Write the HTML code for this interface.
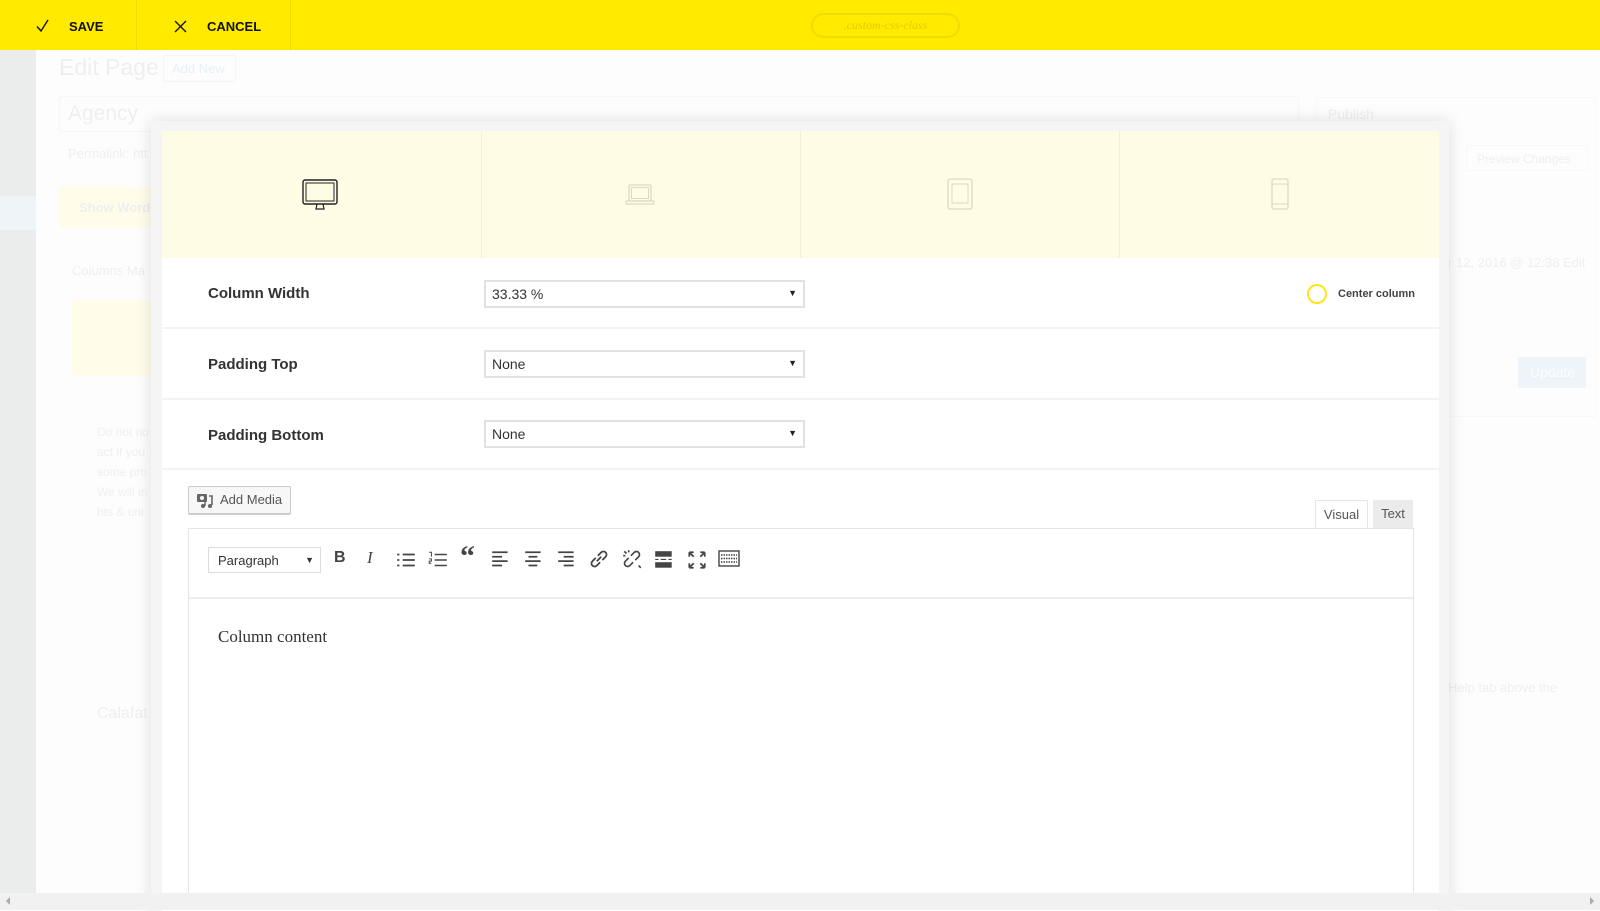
<!DOCTYPE html>
<html><head><meta charset="utf-8"><style>
*{margin:0;padding:0;box-sizing:border-box}
body{width:1600px;height:910px;overflow:hidden;background:#fdfdfd;font-family:"Liberation Sans","DejaVu Sans",sans-serif;position:relative}
.abs{position:absolute}
.top{left:0;top:0;width:1600px;height:50px;background:#ffea00}
.tb{font-weight:bold;font-size:13px;color:#111;top:19px}
.sep{top:0;width:1px;height:50px;background:#f0d800}
.pill{left:811px;top:13px;width:149px;height:25px;border:2px solid #f2dc00;border-radius:13px;color:#e3cc00;font:italic 12px "Liberation Serif",serif;text-align:center;line-height:21px}
.side{left:0;top:50px;width:36px;height:843px;background:#ebecec}
.fade{color:#efefef;white-space:nowrap}
.modal{left:151px;top:121px;width:1298px;height:790px;background:#f5f5f5;box-shadow:0 0 16px rgba(0,0,0,.12)}
.inner{left:162px;top:131px;width:1277px;height:780px;background:#fff}
.tabs{left:162px;top:131px;width:1277px;height:127px;background:#fffce6}
.vs{top:131px;width:1px;height:127px;background:#f4f0d6}
.row{left:162px;width:1277px;height:2px;background:#f3f3f3}
.lbl{left:208px;font-weight:bold;font-size:15px;color:#333}
.sel{left:484px;width:321px;height:28px;border:2px solid #e2e2e2;font-size:14px;color:#333;padding:4px 0 0 6px}
.sel:after{content:"▼";position:absolute;right:6px;top:6px;font-size:9px;color:#222}
.ico{top:548px;width:22px;height:22px}
</style></head><body>
<div class="abs top"></div>
<svg class="abs" style="left:36px;top:19px" width="14" height="14" viewBox="0 0 14 14"><path d="M1 7.5 L5 12 L12 1" fill="none" stroke="#111" stroke-width="1.4"/></svg>
<div class="abs tb" style="left:69px">SAVE</div>
<div class="abs sep" style="left:136px"></div>
<svg class="abs" style="left:174px;top:20px" width="13" height="13" viewBox="0 0 13 13"><path d="M1 1L12 12M12 1L1 12" stroke="#111" stroke-width="1.3"/></svg>
<div class="abs tb" style="left:207px">CANCEL</div>
<div class="abs sep" style="left:290px"></div>
<div class="abs pill">.custom-css-class</div>

<div class="abs side"></div>
<div class="abs" style="left:0;top:196px;width:36px;height:34px;background:#eef4f8"></div>
<div class="abs fade" style="left:59px;top:54px;font-size:23px">Edit Page</div>
<div class="abs" style="left:163px;top:55px;width:73px;height:27px;border:1px solid #f5f5f5;color:#e6f0f7;font-size:13px;padding:5px 8px">Add New</div>
<div class="abs" style="left:59px;top:96px;width:1240px;height:36px;border:1px solid #f7f7f7"></div>
<div class="abs fade" style="left:68px;top:102px;font-size:21px">Agency</div>
<div class="abs fade" style="left:68px;top:146px;font-size:13px">Permalink: htt</div>
<div class="abs" style="left:59px;top:187px;width:100px;height:41px;background:#fffdea"></div>
<div class="abs fade" style="left:79px;top:200px;font-size:13px;font-weight:bold">Show Word</div>
<div class="abs fade" style="left:72px;top:263px;font-size:13px">Columns Ma</div>
<div class="abs" style="left:72px;top:300px;width:90px;height:77px;background:#fffdea"></div>
<div class="abs fade" style="left:97px;top:422px;font-size:12px;line-height:20px">Do not no<br>act if you<br>some pro<br>We will in<br>hts &amp; uni</div>
<div class="abs fade" style="left:97px;top:705px;font-size:16px">Calafat</div>
<div class="abs" style="left:1316px;top:97px;width:280px;height:320px;border:1px solid #f8f8f8"></div>
<div class="abs fade" style="left:1328px;top:106px;font-size:14px">Publish</div>
<div class="abs" style="left:1466px;top:145px;width:122px;height:26px;border:1px solid #f8f8f8;color:#efefef;font-size:12px;padding:6px 10px;white-space:nowrap">Preview Changes</div>
<div class="abs fade" style="left:1448px;top:255px;font-size:13px">r 12, 2016 @ 12:38 Edit</div>
<div class="abs" style="left:1518px;top:357px;width:68px;height:31px;background:#eef5fa;color:#fbfdfe;font-size:14px;padding:7px 0 0 12px">Update</div>
<div class="abs fade" style="left:1448px;top:680px;font-size:13px">Help tab above the</div>

<div class="abs modal"></div>
<div class="abs inner"></div>
<div class="abs tabs"></div>
<div class="abs vs" style="left:481px"></div>
<div class="abs vs" style="left:800px"></div>
<div class="abs vs" style="left:1119px"></div>
<svg class="abs" style="left:302px;top:179px" width="36" height="32" viewBox="0 0 36 32"><rect x="1" y="1" width="34" height="24" rx="2" fill="none" stroke="#222" stroke-width="1.4"/><rect x="4" y="4" width="28" height="18" fill="none" stroke="#222" stroke-width="1"/><path d="M15 25 L14 30 H22 L21 25" fill="none" stroke="#222" stroke-width="1.2"/></svg>
<svg class="abs" style="left:625px;top:184px" width="30" height="22" viewBox="0 0 30 22"><rect x="4" y="1" width="22" height="16" rx="1" fill="none" stroke="#ddd9c4" stroke-width="1.3"/><rect x="6.5" y="3.5" width="17" height="11" fill="none" stroke="#ddd9c4"/><rect x="1" y="17" width="28" height="3" rx="1" fill="none" stroke="#ddd9c4" stroke-width="1.2"/></svg>
<svg class="abs" style="left:947px;top:178px" width="26" height="32" viewBox="0 0 26 32"><rect x="1" y="1" width="24" height="30" rx="2" fill="none" stroke="#ddd9c4" stroke-width="1.3"/><rect x="5" y="6" width="16" height="19" fill="none" stroke="#ddd9c4"/></svg>
<svg class="abs" style="left:1271px;top:178px" width="18" height="32" viewBox="0 0 18 32"><rect x="1" y="1" width="16" height="30" rx="2" fill="none" stroke="#ddd9c4" stroke-width="1.3"/><path d="M1 6H17M1 26H17" stroke="#ddd9c4"/></svg>

<div class="abs lbl" style="top:285px">Column Width</div>
<div class="abs sel" style="top:280px">33.33 %</div>
<div class="abs" style="left:1307px;top:284px;width:20px;height:20px;border:2px solid #ffe51a;border-radius:50%"></div>
<div class="abs" style="left:1338px;top:288px;font-size:11px;font-weight:bold;color:#444">Center column</div>
<div class="abs row" style="top:327px"></div>
<div class="abs lbl" style="top:356px">Padding Top</div>
<div class="abs sel" style="top:350px">None</div>
<div class="abs row" style="top:398px"></div>
<div class="abs lbl" style="top:427px">Padding Bottom</div>
<div class="abs sel" style="top:420px">None</div>
<div class="abs row" style="top:468px"></div>

<div class="abs" style="left:188px;top:486px;width:103px;height:28px;border:1px solid #ccc;border-radius:2px;background:#f7f7f7;box-shadow:0 1px 0 #ccc;font-size:13px;color:#555;padding:5px 0 0 31px">Add Media</div>
<svg class="abs" style="left:196px;top:491px" width="18" height="18" viewBox="0 0 18 18"><rect x="1" y="3" width="10" height="8" rx="1" fill="#666"/><circle cx="6" cy="7" r="2" fill="#f7f7f7"/><path d="M13 5H16V14" fill="none" stroke="#666" stroke-width="1.6"/><circle cx="14" cy="15" r="2" fill="#666"/><circle cx="7" cy="15" r="2" fill="#666"/><path d="M9 15V11" stroke="#666" stroke-width="1.5"/></svg>
<div class="abs" style="left:1315px;top:500px;width:53px;height:29px;border:1px solid #e5e5e5;border-bottom:none;background:#fff;font-size:13px;color:#555;text-align:center;padding-top:6px">Visual</div>
<div class="abs" style="left:1373px;top:500px;width:40px;height:28px;background:#ebebeb;font-size:13px;color:#555;text-align:center;padding-top:6px">Text</div>
<div class="abs" style="left:188px;top:528px;width:1226px;height:370px;border:1px solid #e5e5e5;background:#fff"></div>
<div class="abs" style="left:189px;top:597px;width:1224px;height:2px;background:#ececec"></div>
<div class="abs" style="left:208px;top:547px;width:113px;height:26px;border:1px solid #ddd;font-size:13px;color:#333;padding:5px 0 0 9px">Paragraph<span style="position:absolute;right:6px;top:7px;font-size:9px">▼</span></div>
<div class="abs" style="left:334px;top:549px;font-weight:bold;font-size:16px;color:#444">B</div>
<div class="abs" style="left:367px;top:548px;font:italic 17px 'Liberation Serif',serif;color:#444">I</div>
<svg class="abs ico" style="left:395px;top:549px" viewBox="0 0 20 20"><path d="M2 5h2M2 10h2M2 15h2M7 5h11M7 10h11M7 15h11" stroke="#444" stroke-width="1.6"/></svg>
<svg class="abs ico" style="left:427px;top:549px" viewBox="0 0 20 20"><path d="M7 5h11M7 10h11M7 15h11" stroke="#444" stroke-width="1.4"/><path d="M2 3h2v4M2 9h2v2h-2v2h2" fill="none" stroke="#444" stroke-width=".9"/></svg>
<div class="abs" style="left:460px;top:542px;font:bold 30px 'Liberation Serif',serif;color:#444;line-height:30px">“</div>
<svg class="abs ico" style="left:490px;top:549px" viewBox="0 0 20 20"><path d="M2 3h14M2 7h9M2 11h14M2 15h9" stroke="#444" stroke-width="1.6"/></svg>
<svg class="abs ico" style="left:523px;top:549px" viewBox="0 0 20 20"><path d="M2 3h14M5 7h8M2 11h14M5 15h8" stroke="#444" stroke-width="1.6"/></svg>
<svg class="abs ico" style="left:556px;top:549px" viewBox="0 0 20 20"><path d="M2 3h14M7 7h9M2 11h14M7 15h9" stroke="#444" stroke-width="1.6"/></svg>
<svg class="abs ico" style="left:588px;top:548px" viewBox="0 0 20 20"><path d="M8 12l4-4M7 9l-3 3a2.5 2.5 0 0 0 4 4l3-3M13 11l3-3a2.5 2.5 0 0 0-4-4l-3 3" fill="none" stroke="#444" stroke-width="1.6"/></svg>
<svg class="abs ico" style="left:621px;top:548px" viewBox="0 0 20 20"><path d="M7 9l-3 3a2.5 2.5 0 0 0 4 4l3-3M13 11l3-3a2.5 2.5 0 0 0-4-4l-3 3M3 3l2 2M16 16l2 2M7 2v2M2 7h2" fill="none" stroke="#444" stroke-width="1.5"/></svg>
<svg class="abs ico" style="left:653px;top:549px" viewBox="0 0 20 20"><rect x="2" y="2" width="15" height="5" fill="#444"/><rect x="2" y="12" width="15" height="5" fill="#444"/><path d="M2 9.5h3M7 9.5h5M14 9.5h3" stroke="#444"/></svg>
<svg class="abs ico" style="left:686px;top:549px" viewBox="0 0 20 20"><path d="M3 3l4 4M17 3l-4 4M3 17l4-4M17 17l-4-4M3 3h4M3 3v4M17 3h-4M17 3v4M3 17h4M3 17v-4M17 17h-4M17 17v-4" fill="none" stroke="#444" stroke-width="1.6"/></svg>
<svg class="abs ico" style="left:718px;top:548px" viewBox="0 0 22 22"><rect x="1" y="3" width="20" height="15" fill="none" stroke="#444" stroke-width="1.4"/><path d="M3 7h16M3 10.5h16M3 14h16" stroke="#444" stroke-dasharray="1.5 1" stroke-width="1.6"/></svg>
<div class="abs" style="left:218px;top:627px;font:17px 'Liberation Serif',serif;color:#333">Column content</div>

<div class="abs" style="left:0;top:893px;width:1600px;height:17px;background:#f1f1f1"></div>
<div class="abs" style="left:6px;top:897px;width:0;height:0;border-top:4px solid transparent;border-bottom:4px solid transparent;border-right:4px solid #aaa"></div>
<div class="abs" style="left:1590px;top:897px;width:0;height:0;border-top:4px solid transparent;border-bottom:4px solid transparent;border-left:4px solid #aaa"></div>
</body></html>
